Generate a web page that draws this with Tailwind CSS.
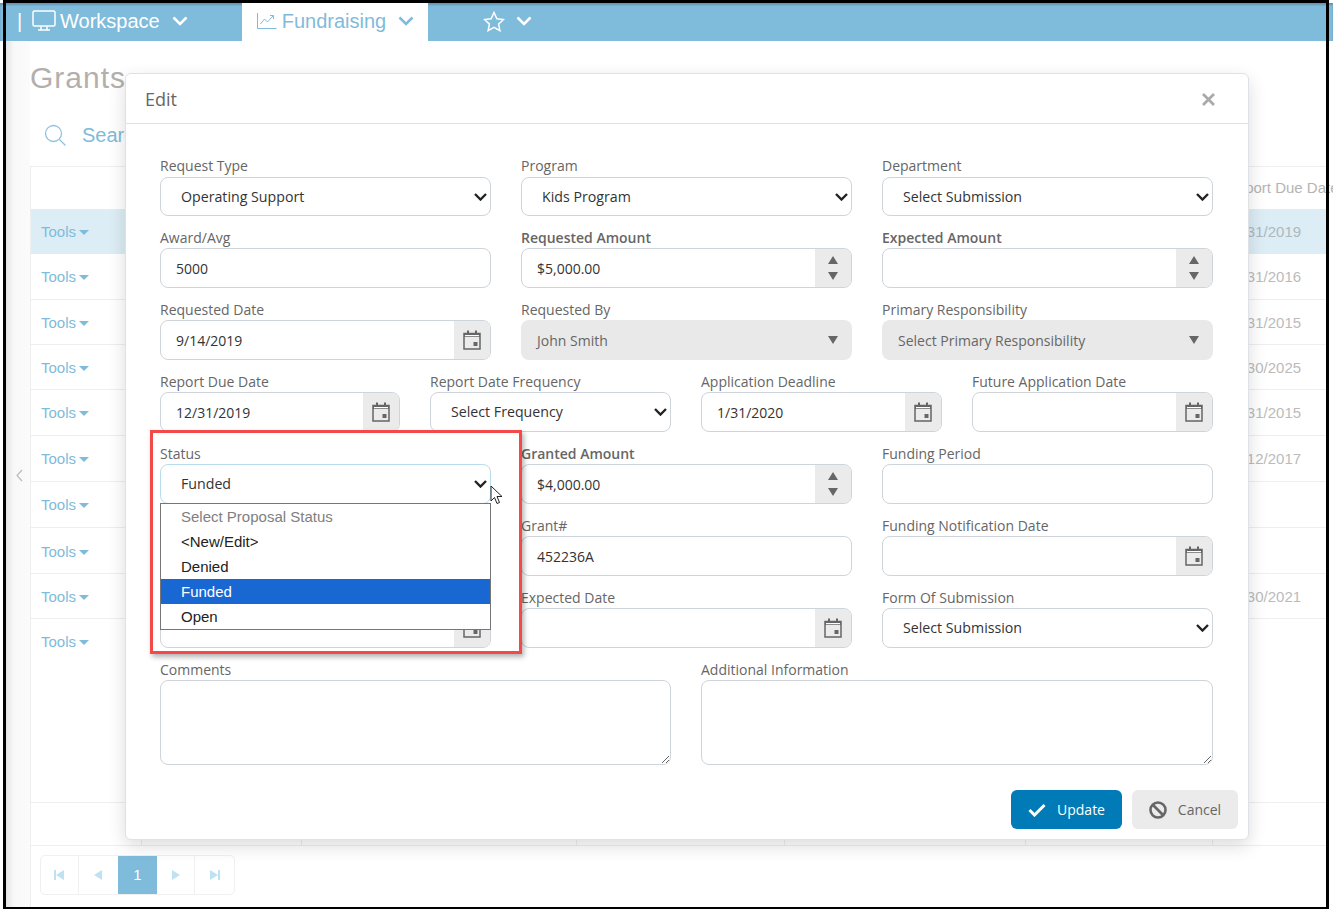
<!DOCTYPE html>
<html lang="en">
<head>
    <meta charset="UTF-8">
    <meta name="viewport" content="width=device-width, initial-scale=1.0">
    <title>Grants</title>
    <script src="https://cdn.jsdelivr.net/npm/@tailwindcss/browser@4"></script>
</head>
<body class="bg-white">
    <svg class="hidden">
        <symbol id="cal" viewBox="0 0 18 20">
            <path fill="none" stroke="#666" stroke-width="1.5" d="M1 3.5h16v15.500h-16z"/>
            <path fill="#666" d="M1 3h16v4h-16zM4 .5h2v4h-2zM12 .5h2v4h-2zM10.500 12h4v4h-4z"/>
            <path fill="#fff" d="M2 5h14v1.200h-14z"/>
        </symbol>
        <symbol id="chev" viewBox="0 0 16 10">
            <path fill="none" stroke="currentColor" stroke-width="2.600" d="M1.500 1.500l6.500 6.500l6.500-6.500"/>
        </symbol>
        <symbol id="selchev" viewBox="0 0 13 8">
            <path fill="none" stroke="#222" stroke-width="2.400" d="M1 1l5.500 5.500l5.500-5.500"/>
        </symbol>
    </svg>

    <div class="relative w-[1333px] h-[909px] overflow-hidden font-['Liberation_Sans',sans-serif]">
        <!-- nav -->
        <nav class="mt-[3px] h-[38px] bg-[#7fbbdb] shadow-[inset_0_2px_2px_rgba(0,0,0,0.2)] flex items-center text-white text-[20px]">
            <span class="ml-[17px] w-[15px] -mt-[2px]">|</span>
            <svg class="w-[24px] h-[22px] -mt-[2px]" viewBox="0 0 24 22" fill="none" stroke="#fff" stroke-width="1.500"><rect x="1" y="1" width="22" height="15" rx="1.500"/><path d="M9 16.500v3M15 16.500v3M6 20h12"/></svg>
            <span class="ml-[4px] -mt-[2px]">Workspace</span>
            <svg class="ml-[12px] w-[16px] h-[10px] -mt-[2px]"><use href="#chev"/></svg>
            <div class="ml-[54px] w-[186px] h-[38px] bg-white flex items-center text-[#7fbbdb]">
                <svg class="ml-[15px] w-[20px] h-[18px] -mt-[2px]" viewBox="0 0 20 18" fill="none" stroke="#7fbbdb" stroke-width="1"><path d="M.5 1v15.500h19"/><path d="M3.500 12l4-5l3 3l5.500-6M13 3.500h3.500v3.500"/></svg>
                <span class="ml-[5px] -mt-[2px]">Fundraising</span>
                <svg class="ml-[12px] w-[16px] h-[10px] -mt-[2px]"><use href="#chev"/></svg>
            </div>
            <svg class="ml-[55px] w-[22px] h-[21px] -mt-[2px]" viewBox="0 0 22 21" fill="none" stroke="#fff" stroke-width="1.500"><path d="M11 1.500l2.900 6.200l6.600.8l-4.900 4.600l1.300 6.600l-5.900-3.300l-5.900 3.300l1.300-6.600l-4.900-4.600l6.600-.8z"/></svg>
            <svg class="ml-[11px] w-[16px] h-[10px] -mt-[2px]"><use href="#chev"/></svg>
        </nav>

        <!-- page behind the modal -->
        <div class="flex h-[868px]">
            <div class="w-[30px] shrink-0 bg-[linear-gradient(90deg,#fff_3px,#e4e4e4_6px,#f8f8f8_14px,#fbfbfb)] relative">
                <svg class="absolute left-[16px] top-[428px] w-[7px] h-[13px]" viewBox="0 0 7 13" fill="none" stroke="#bbb" stroke-width="1.200"><path d="M6 1l-5 5.500l5 5.500"/></svg>
            </div>
            <div class="w-[1298px] shrink-0 text-[15px]">
                <h1 class="h-[75px] pt-[19px] text-[30px] leading-[36px] tracking-[1px] text-[#b3afac]">Grants</h1>
                <div class="h-[50px] flex items-center gap-[16px] pl-[14px] pb-[12px] text-[#7fbbdb] text-[20px]">
                    <svg class="w-[22px] h-[22px]" viewBox="0 0 22 22" fill="none" stroke="#8cc4e2" stroke-width="1.300"><circle cx="9.500" cy="9.500" r="8"/><path d="M15.500 15.500l6 6"/></svg>
                    <span>Search</span>
                </div>
                <div class="border-l border-t border-[#eeeeee] h-[743px] flex flex-col">
                    <div class="h-[42px] flex justify-end items-center text-[#b4b4b4]"><span class="w-[115px] pl-[13px] whitespace-nowrap">Report Due Date</span></div>
                    <div class="h-[45px] pt-[2px] bg-[#dcedf5] flex items-center justify-between text-[#7fbbdb]"><span class="pl-[10px] flex items-center gap-[3px]">Tools <i class="border-x-[5px] border-t-[5px] border-x-transparent border-t-[#7fbbdb]"></i></span><span class="w-[115px] pl-[13px] text-[#aeb8bd]">12/31/2019</span></div>
                    <div class="h-[46px] pt-[2px] border-b border-[#eeeeee] flex items-center justify-between text-[#7fbbdb]"><span class="pl-[10px] flex items-center gap-[3px]">Tools <i class="border-x-[5px] border-t-[5px] border-x-transparent border-t-[#7fbbdb]"></i></span><span class="w-[115px] pl-[13px] text-[#bbb]">12/31/2016</span></div>
                    <div class="h-[45px] pt-[2px] border-b border-[#eeeeee] flex items-center justify-between text-[#7fbbdb]"><span class="pl-[10px] flex items-center gap-[3px]">Tools <i class="border-x-[5px] border-t-[5px] border-x-transparent border-t-[#7fbbdb]"></i></span><span class="w-[115px] pl-[13px] text-[#bbb]">12/31/2015</span></div>
                    <div class="h-[45px] pt-[2px] border-b border-[#eeeeee] flex items-center justify-between text-[#7fbbdb]"><span class="pl-[10px] flex items-center gap-[3px]">Tools <i class="border-x-[5px] border-t-[5px] border-x-transparent border-t-[#7fbbdb]"></i></span><span class="w-[115px] pl-[13px] text-[#bbb]">09/30/2025</span></div>
                    <div class="h-[46px] pt-[2px] border-b border-[#eeeeee] flex items-center justify-between text-[#7fbbdb]"><span class="pl-[10px] flex items-center gap-[3px]">Tools <i class="border-x-[5px] border-t-[5px] border-x-transparent border-t-[#7fbbdb]"></i></span><span class="w-[115px] pl-[13px] text-[#bbb]">12/31/2015</span></div>
                    <div class="h-[46px] pt-[2px] border-b border-[#eeeeee] flex items-center justify-between text-[#7fbbdb]"><span class="pl-[10px] flex items-center gap-[3px]">Tools <i class="border-x-[5px] border-t-[5px] border-x-transparent border-t-[#7fbbdb]"></i></span><span class="w-[115px] pl-[13px] text-[#bbb]">12/12/2017</span></div>
                    <div class="h-[46px] pt-[2px] border-b border-[#eeeeee] flex items-center text-[#7fbbdb]"><span class="pl-[10px] flex items-center gap-[3px]">Tools <i class="border-x-[5px] border-t-[5px] border-x-transparent border-t-[#7fbbdb]"></i></span></div>
                    <div class="h-[46px] pt-[3px] border-b border-[#eeeeee] flex items-center text-[#7fbbdb]"><span class="pl-[10px] flex items-center gap-[3px]">Tools <i class="border-x-[5px] border-t-[5px] border-x-transparent border-t-[#7fbbdb]"></i></span></div>
                    <div class="h-[45px] pt-[2px] border-b border-[#eeeeee] flex items-center justify-between text-[#7fbbdb]"><span class="pl-[10px] flex items-center gap-[3px]">Tools <i class="border-x-[5px] border-t-[5px] border-x-transparent border-t-[#7fbbdb]"></i></span><span class="w-[115px] pl-[13px] text-[#bbb]">09/30/2021</span></div>
                    <div class="h-[45px] pt-[2px] flex items-center text-[#7fbbdb]"><span class="pl-[10px] flex items-center gap-[3px]">Tools <i class="border-x-[5px] border-t-[5px] border-x-transparent border-t-[#7fbbdb]"></i></span></div>
                    <div class="h-[139px] border-b border-[#eeeeee]"></div>
                    <div class="h-[43px] border-b border-[#eeeeee] flex">
                        <div class="w-[111px] border-r border-[#eeeeee]"></div>
                        <div class="w-[160px] border-r border-[#eeeeee]"></div>
                        <div class="w-[275px] border-r border-[#eeeeee]"></div>
                        <div class="w-[208px] border-r border-[#eeeeee]"></div>
                        <div class="w-[241px] border-r border-[#eeeeee]"></div>
                        <div class="w-[187px] border-r border-[#eeeeee]"></div>
                    </div>
                    <div class="pt-[9px] pl-[9px]">
                        <div class="w-[195px] h-[40px] flex items-center border border-[#f0f0f0] rounded-[5px] overflow-hidden">
                            <div class="w-[38px] h-full border-r border-[#f0f0f0] flex items-center justify-center"><svg class="w-[10px] h-[10px]" viewBox="0 0 10 10" fill="#bfe2f3"><path d="M0 0h2v10h-2zM10 0v10l-8-5z"/></svg></div>
                            <div class="w-[39px] h-full flex items-center justify-center"><svg class="w-[8px] h-[10px]" viewBox="0 0 8 10" fill="#bfe2f3"><path d="M8 0v10l-8-5z"/></svg></div>
                            <div class="w-[40px] h-[40px] bg-[#7fbbdb] text-white text-[15px] flex items-center justify-center">1</div>
                            <div class="w-[38px] h-full border-r border-[#f0f0f0] flex items-center justify-center"><svg class="w-[8px] h-[10px]" viewBox="0 0 8 10" fill="#bfe2f3"><path d="M0 0v10l8-5z"/></svg></div>
                            <div class="w-[39px] h-full flex items-center justify-center"><svg class="w-[10px] h-[10px]" viewBox="0 0 10 10" fill="#bfe2f3"><path d="M8 0h2v10h-2zM0 0v10l8-5z"/></svg></div>
                        </div>
                    </div>
                </div>
            </div>
        </div>

        <!-- modal -->
        <div class="absolute left-[125px] top-[73px] w-[1124px] h-[767px] bg-white border border-[#dee2e6] rounded-[6px] shadow-[0_6px_18px_rgba(0,0,0,0.14)] font-['Open_Sans',sans-serif] text-[14px] text-[#666]">
            <div class="h-[50px] pt-[2px] border-b border-[#dee2e6] flex items-center justify-between pl-[19px] pr-[33px]">
                <span class="text-[18px] text-[#666]">Edit</span>
                <svg class="w-[13px] h-[13px]" viewBox="0 0 13 13" fill="none" stroke="#aaa" stroke-width="2.800"><path d="M1 1l11 11M12 1l-11 11"/></svg>
            </div>
            <div class="pt-[32px] pl-[34px] pr-[35px] flex flex-col gap-y-[11px]">
                <div class="grid grid-cols-[331px_331px_331px] gap-x-[30px]">
                    <div><label class="block h-[21px] leading-[19px]">Request Type</label><div class="relative"><select class="appearance-none w-full h-[39px] px-[20px] border border-[#ced4da] rounded-[8px] bg-white text-[#333] text-[14.2px]"><option>Operating Support</option></select><svg class="absolute right-[4px] top-[16px] w-[13px] h-[8px] pointer-events-none"><use href="#selchev"/></svg></div></div>
                    <div><label class="block h-[21px] leading-[19px]">Program</label><div class="relative"><select class="appearance-none w-full h-[39px] px-[20px] border border-[#ced4da] rounded-[8px] bg-white text-[#333] text-[14.2px]"><option>Kids Program</option></select><svg class="absolute right-[4px] top-[16px] w-[13px] h-[8px] pointer-events-none"><use href="#selchev"/></svg></div></div>
                    <div><label class="block h-[21px] leading-[19px]">Department</label><div class="relative"><select class="appearance-none w-full h-[39px] px-[20px] border border-[#ced4da] rounded-[8px] bg-white text-[#333] text-[14.2px]"><option>Select Submission</option></select><svg class="absolute right-[4px] top-[16px] w-[13px] h-[8px] pointer-events-none"><use href="#selchev"/></svg></div></div>
                </div>
                <div class="grid grid-cols-[331px_331px_331px] gap-x-[30px]">
                    <div><label class="block h-[21px] leading-[21px]">Award/Avg</label><input value="5000" class="w-full h-[40px] px-[15px] border border-[#ced4da] rounded-[8px] text-[#333]"></div>
                    <div><label class="block h-[21px] leading-[21px] font-semibold">Requested Amount</label>
                        <div class="flex h-[40px] border border-[#ced4da] rounded-[8px] overflow-hidden"><input value="$5,000.00" class="flex-1 min-w-0 px-[15px] text-[#333]"><div class="w-[36px] bg-[#ebebeb] flex flex-col items-center justify-center gap-[8px]"><i class="border-x-[5px] border-b-[8px] border-x-transparent border-b-[#666]"></i><i class="border-x-[5px] border-t-[8px] border-x-transparent border-t-[#666]"></i></div></div></div>
                    <div><label class="block h-[21px] leading-[21px] font-semibold">Expected Amount</label>
                        <div class="flex h-[40px] border border-[#ced4da] rounded-[8px] overflow-hidden"><input class="flex-1 min-w-0 px-[15px] text-[#333]"><div class="w-[36px] bg-[#ebebeb] flex flex-col items-center justify-center gap-[8px]"><i class="border-x-[5px] border-b-[8px] border-x-transparent border-b-[#666]"></i><i class="border-x-[5px] border-t-[8px] border-x-transparent border-t-[#666]"></i></div></div></div>
                </div>
                <div class="grid grid-cols-[331px_331px_331px] gap-x-[30px]">
                    <div><label class="block h-[21px] leading-[21px]">Requested Date</label>
                        <div class="flex h-[40px] border border-[#ced4da] rounded-[8px] overflow-hidden"><input value="9/14/2019" class="flex-1 min-w-0 px-[15px] text-[#333]"><div class="w-[36px] bg-[#ebebeb] flex items-center justify-center"><svg class="w-[18px] h-[20px]"><use href="#cal"/></svg></div></div></div>
                    <div><label class="block h-[21px] leading-[21px]">Requested By</label>
                        <div class="h-[40px] rounded-[8px] bg-[#e9e9e9] flex items-center justify-between pl-[16px] pr-[14px]"><span>John Smith</span><i class="border-x-[5px] border-t-[8px] border-x-transparent border-t-[#666]"></i></div></div>
                    <div><label class="block h-[21px] leading-[21px]">Primary Responsibility</label>
                        <div class="h-[40px] rounded-[8px] bg-[#e9e9e9] flex items-center justify-between pl-[16px] pr-[14px]"><span>Select Primary Responsibility</span><i class="border-x-[5px] border-t-[8px] border-x-transparent border-t-[#666]"></i></div></div>
                </div>
                <div class="grid grid-cols-[240px_241px_241px_241px] gap-x-[30px]">
                    <div><label class="block h-[21px] leading-[21px]">Report Due Date</label>
                        <div class="flex h-[40px] border border-[#ced4da] rounded-[8px] overflow-hidden"><input value="12/31/2019" class="flex-1 min-w-0 px-[15px] text-[#333]"><div class="w-[36px] bg-[#ebebeb] flex items-center justify-center"><svg class="w-[18px] h-[20px]"><use href="#cal"/></svg></div></div></div>
                    <div><label class="block h-[21px] leading-[21px]">Report Date Frequency</label><div class="relative"><select class="appearance-none w-full h-[40px] px-[20px] border border-[#ced4da] rounded-[8px] bg-white text-[#333] text-[14.2px]"><option>Select Frequency</option></select><svg class="absolute right-[4px] top-[16px] w-[13px] h-[8px] pointer-events-none"><use href="#selchev"/></svg></div></div>
                    <div><label class="block h-[21px] leading-[21px]">Application Deadline</label>
                        <div class="flex h-[40px] border border-[#ced4da] rounded-[8px] overflow-hidden"><input value="1/31/2020" class="flex-1 min-w-0 px-[15px] text-[#333]"><div class="w-[36px] bg-[#ebebeb] flex items-center justify-center"><svg class="w-[18px] h-[20px]"><use href="#cal"/></svg></div></div></div>
                    <div><label class="block h-[21px] leading-[21px]">Future Application Date</label>
                        <div class="flex h-[40px] border border-[#ced4da] rounded-[8px] overflow-hidden"><input class="flex-1 min-w-0 px-[15px] text-[#333]"><div class="w-[36px] bg-[#ebebeb] flex items-center justify-center"><svg class="w-[18px] h-[20px]"><use href="#cal"/></svg></div></div></div>
                </div>
                <div class="grid grid-cols-[331px_331px_331px] gap-x-[30px]">
                    <div class="relative"><label class="block h-[21px] leading-[21px]">Status</label><div class="relative"><select class="appearance-none w-full h-[40px] px-[20px] border border-[#b9dcef] rounded-[8px] bg-white text-[#333] text-[14.2px]"><option>Funded</option></select><svg class="absolute right-[4px] top-[16px] w-[13px] h-[8px] pointer-events-none"><use href="#selchev"/></svg></div>
                        <!-- open dropdown list -->
                        <ul class="absolute z-10 left-0 top-[60px] w-[331px] h-[127px] border border-[#767676] bg-white font-['Liberation_Sans',sans-serif] text-[15px] text-[#222]">
                            <li class="h-[25px] leading-[25px] pl-[20px] text-[#808080]">Select Proposal Status</li>
                            <li class="h-[25px] leading-[25px] pl-[20px]">&lt;New/Edit&gt;</li>
                            <li class="h-[25px] leading-[25px] pl-[20px]">Denied</li>
                            <li class="h-[25px] leading-[25px] pl-[20px] bg-[#1967d2] text-white">Funded</li>
                            <li class="h-[25px] leading-[25px] pl-[20px]">Open</li>
                        </ul>
                    </div>
                    <div><label class="block h-[21px] leading-[21px] font-semibold">Granted Amount</label>
                        <div class="flex h-[40px] border border-[#ced4da] rounded-[8px] overflow-hidden"><input value="$4,000.00" class="flex-1 min-w-0 px-[15px] text-[#333]"><div class="w-[36px] bg-[#ebebeb] flex flex-col items-center justify-center gap-[8px]"><i class="border-x-[5px] border-b-[8px] border-x-transparent border-b-[#666]"></i><i class="border-x-[5px] border-t-[8px] border-x-transparent border-t-[#666]"></i></div></div></div>
                    <div><label class="block h-[21px] leading-[21px]">Funding Period</label><input class="w-full h-[40px] px-[15px] border border-[#ced4da] rounded-[8px]"></div>
                </div>
                <div class="grid grid-cols-[331px_331px_331px] gap-x-[30px]">
                    <div><div class="h-[21px]"></div><input class="w-full h-[40px] px-[15px] border border-[#ced4da] rounded-[8px]"></div>
                    <div><label class="block h-[21px] leading-[21px]">Grant#</label><input value="452236A" class="w-full h-[40px] px-[15px] border border-[#ced4da] rounded-[8px] text-[#333]"></div>
                    <div><label class="block h-[21px] leading-[21px]">Funding Notification Date</label>
                        <div class="flex h-[40px] border border-[#ced4da] rounded-[8px] overflow-hidden"><input class="flex-1 min-w-0 px-[15px] text-[#333]"><div class="w-[36px] bg-[#ebebeb] flex items-center justify-center"><svg class="w-[18px] h-[20px]"><use href="#cal"/></svg></div></div></div>
                </div>
                <div class="grid grid-cols-[331px_331px_331px] gap-x-[30px]">
                    <div><div class="h-[21px]"></div>
                        <div class="flex h-[40px] border border-[#ced4da] rounded-[8px] overflow-hidden"><input class="flex-1 min-w-0 px-[15px] text-[#333]"><div class="w-[36px] bg-[#ebebeb] flex items-center justify-center"><svg class="w-[18px] h-[20px]"><use href="#cal"/></svg></div></div></div>
                    <div><label class="block h-[21px] leading-[21px]">Expected Date</label>
                        <div class="flex h-[40px] border border-[#ced4da] rounded-[8px] overflow-hidden"><input class="flex-1 min-w-0 px-[15px] text-[#333]"><div class="w-[36px] bg-[#ebebeb] flex items-center justify-center"><svg class="w-[18px] h-[20px]"><use href="#cal"/></svg></div></div></div>
                    <div><label class="block h-[21px] leading-[21px]">Form Of Submission</label><div class="relative"><select class="appearance-none w-full h-[40px] px-[20px] border border-[#ced4da] rounded-[8px] bg-white text-[#333] text-[14.2px]"><option>Select Submission</option></select><svg class="absolute right-[4px] top-[16px] w-[13px] h-[8px] pointer-events-none"><use href="#selchev"/></svg></div></div>
                </div>
                <div class="grid grid-cols-[511px_512px] gap-x-[30px]">
                    <div><label class="block h-[21px] leading-[21px]">Comments</label><textarea class="block w-full h-[85px] px-[15px] py-[6px] border border-[#ced4da] rounded-[8px]"></textarea></div>
                    <div><label class="block h-[21px] leading-[21px]">Additional Information</label><textarea class="block w-full h-[85px] px-[15px] py-[6px] border border-[#ced4da] rounded-[8px]"></textarea></div>
                </div>
            </div>
            <div class="mt-[25px] pr-[10px] flex justify-end gap-[10px]">
                <button class="w-[111px] h-[39px] bg-[#007bb8] rounded-[6px] text-white flex items-center justify-center gap-[11px]">
                    <svg class="w-[18px] h-[14px]" viewBox="0 0 18 14" fill="none" stroke="#fff" stroke-width="3"><path d="M1.500 7l5 5l10-10"/></svg>Update</button>
                <button class="w-[106px] h-[39px] bg-[#ebebeb] rounded-[6px] text-[#666] flex items-center justify-center gap-[11px]">
                    <svg class="w-[18px] h-[18px]" viewBox="0 0 18 18" fill="none" stroke="#666" stroke-width="2.600"><circle cx="9" cy="9" r="7.500"/><path d="M4 4l10 10"/></svg>Cancel</button>
            </div>
        </div>

        <!-- red callout and pointer on top of the screenshot -->
        <div class="absolute left-[150px] top-[430px] w-[372px] h-[224px] border-[3px] border-[#f24949] shadow-[2px_3px_5px_rgba(0,0,0,0.3)]"></div>
        <svg class="absolute left-[490px] top-[485px] w-[13px] h-[21px]" viewBox="0 0 13 21"><path fill="#fff" stroke="#222" d="M1 1v15l3.500-3.500l2.500 6l2.500-1l-2.500-6h5z"/></svg>

        <!-- black frame from the capture -->
        <div class="absolute left-[3px] top-0 w-[1326px] h-[3px] bg-black"></div>
        <div class="absolute left-[3px] top-0 w-[3px] h-[909px] bg-black"></div>
        <div class="absolute left-[1326px] top-0 w-[3px] h-[909px] bg-black"></div>
        <div class="absolute left-[3px] top-[907px] w-[1326px] h-[2px] bg-black"></div>
    </div>
</body>
</html>
